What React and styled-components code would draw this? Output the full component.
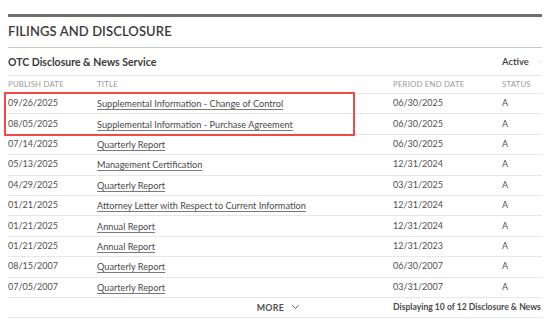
import React from "react";
import styled, { createGlobalStyle } from "styled-components";

const Global = createGlobalStyle`
  html, body { margin: 0; padding: 0; background: #fff; }
  body { font-family: Lato, "Open Sans", "Noto Sans", sans-serif; color: #444; }
`;

const Page = styled.div`
  padding: 14px 12px 0 8px;
  width: 554px;
  box-sizing: border-box;
`;

const Section = styled.section`
  border-top: 3px solid #6e6e6e;
`;

const SectionTitle = styled.h2`
  margin: 0;
  height: 31px;
  box-sizing: border-box;
  padding-bottom: 3px;
  display: flex;
  align-items: center;
  font-size: 13px;
  font-weight: 600;
  color: #3a3a3a;
  letter-spacing: 0.1px;
  border-bottom: 1px solid #c8c8c8;
`;

const SubHeader = styled.div`
  height: 28px;
  box-sizing: border-box;
  display: flex;
  align-items: center;
  justify-content: space-between;
  border-bottom: 1px solid #e6e6e6;
`;

const SubTitle = styled.div`
  font-size: 10.5px;
  font-weight: 700;
  color: #3a3a3a;
`;

const FilterWrap = styled.div`
  display: flex;
  align-items: center;
  gap: 10px;
  width: 40px;
  font-size: 9.5px;
  font-weight: 600;
  color: #3a3a3a;
`;

const Grid = styled.div`
  display: grid;
  grid-template-columns: 89px 296px 109px 1fr;
  align-items: center;
  height: ${(p) => p.$h}px;
  box-sizing: border-box;
  line-height: 1.2;
  border-bottom: 1px solid #e8e8e8;
`;

const HeadCell = styled.div`
  font-size: 7.8px;
  color: #9a9a9a;
  text-transform: uppercase;
  letter-spacing: 0.2px;
`;

const Cell = styled.div`
  font-size: 9px;
  color: #505050;
  white-space: nowrap;
`;

const Link = styled.a`
  display: block;
  justify-self: start;
  font-size: 9.2px;
  color: #4a4a4a;
  text-decoration: underline;
  text-decoration-color: #7a7a7a;
  text-underline-offset: 1.5px;
  white-space: nowrap;
`;

const Body = styled.div`
  position: relative;
`;

const Highlight = styled.div`
  position: absolute;
  left: -4px;
  top: -2px;
  width: 351px;
  height: 44px;
  box-sizing: border-box;
  border: 2px solid #f04a4c;
  pointer-events: none;
`;

const Footer = styled.div`
  display: grid;
  grid-template-columns: 385px 1fr;
  align-items: center;
  height: 20px;
  box-sizing: border-box;
  border-bottom: 1px solid #e8e8e8;
`;

const More = styled.button`
  all: unset;
  justify-self: end;
  margin-right: 94px;
  display: flex;
  align-items: center;
  gap: 8px;
  font-size: 8.8px;
  font-weight: 700;
  color: #505050;
  letter-spacing: 0.3px;
  font-family: inherit;
`;

const Count = styled.div`
  font-size: 8.6px;
  font-weight: 700;
  color: #4a4a4a;
  white-space: nowrap;
  overflow: hidden;
`;

const Chevron = ({ color = "#888", size = 7 }) => (
  <svg width={size} height={size * 0.6} viewBox="0 0 10 6" fill="none">
    <path d="M1 1l4 4 4-4" stroke={color} strokeWidth="1.4" strokeLinecap="round" strokeLinejoin="round" />
  </svg>
);

const rows = [
  ["09/26/2025", "Supplemental Information - Change of Control", "06/30/2025", "A"],
  ["08/05/2025", "Supplemental Information - Purchase Agreement", "06/30/2025", "A"],
  ["07/14/2025", "Quarterly Report", "06/30/2025", "A"],
  ["05/13/2025", "Management Certification", "12/31/2024", "A"],
  ["04/29/2025", "Quarterly Report", "03/31/2025", "A"],
  ["01/21/2025", "Attorney Letter with Respect to Current Information", "12/31/2024", "A"],
  ["01/21/2025", "Annual Report", "12/31/2024", "A"],
  ["01/21/2025", "Annual Report", "12/31/2023", "A"],
  ["08/15/2007", "Quarterly Report", "06/30/2007", "A"],
  ["07/05/2007", "Quarterly Report", "03/31/2007", "A"],
];

export default function App() {
  return (
    <Page>
      <Global />
      <Section>
        <SectionTitle>FILINGS AND DISCLOSURE</SectionTitle>
        <SubHeader>
          <SubTitle>OTC Disclosure &amp; News Service</SubTitle>
          <FilterWrap>
            Active <Chevron color="#aaa" size={6} />
          </FilterWrap>
        </SubHeader>
        <Grid $h={18}>
          <HeadCell>Publish Date</HeadCell>
          <HeadCell>Title</HeadCell>
          <HeadCell>Period End Date</HeadCell>
          <HeadCell>Status</HeadCell>
        </Grid>
        <Body>
          <Highlight />
          {rows.map((r, i) => (
            <Grid key={i} $h={20.4}>
              <Cell>{r[0]}</Cell>
              <Link href="#">{r[1]}</Link>
              <Cell>{r[2]}</Cell>
              <Cell>{r[3]}</Cell>
            </Grid>
          ))}
        </Body>
        <Footer>
          <More>
            MORE <Chevron color="#555" size={7} />
          </More>
          <Count>Displaying 10 of 12 Disclosure &amp; News</Count>
        </Footer>
      </Section>
    </Page>
  );
}
